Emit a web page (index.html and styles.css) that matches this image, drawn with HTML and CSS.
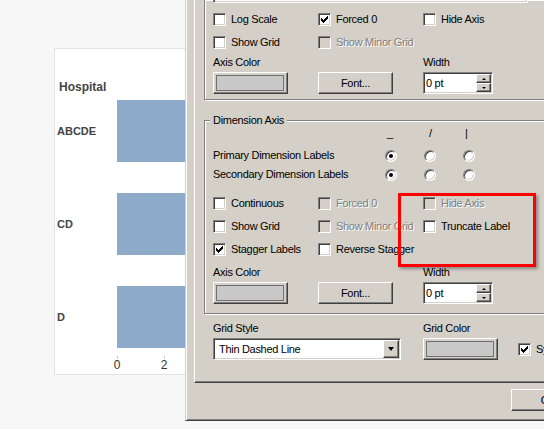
FILE: index.html
```html
<!DOCTYPE html>
<html>
<head>
<meta charset="utf-8">
<link rel="stylesheet" href="styles.css">
</head>
<body>
<div class="chart">
  <div class="dim-title">Hospital</div>
  <div class="rows">
    <div class="row"><span class="lbl">ABCDE</span><div class="bar"></div></div>
    <div class="row"><span class="lbl">CD</span><div class="bar"></div></div>
    <div class="row"><span class="lbl">D</span><div class="bar"></div></div>
  </div>
  <div class="axis"><span class="tick">0</span><span class="tick t2">2</span></div>
</div>

<div class="dialog">
  <div class="page">
    <div class="group g1">
      <div class="edit-top"></div>
      <div class="cgrid">
        <label class="cb"><span class="box"></span>Log Scale</label>
        <label class="cb"><span class="box"><svg width="7" height="7" viewBox="0 0 7 7" shape-rendering="crispEdges"><path d="M6 0h1v1h-1z M5 1h2v1h-2z M0 2h1v1h-1z M4 2h3v1h-3z M0 3h2v1h-2z M3 3h3v1h-3z M0 4h5v1h-5z M1 5h3v1h-3z M2 6h1v1h-1z"/></svg></span>Forced 0</label>
        <label class="cb"><span class="box"></span>Hide Axis</label>
        <label class="cb"><span class="box"></span>Show Grid</label>
        <label class="cb dis"><span class="box"></span>Show Minor Grid</label>
      </div>
      <div class="fgrid">
        <span class="flabel">Axis Color</span>
        <span></span>
        <span class="flabel">Width</span>
        <button class="btn colorbtn"><span class="swatch"></span></button>
        <button class="btn fontbtn">Font...</button>
        <div class="spin"><span class="spin-val">0 pt</span><span class="spin-btns"><span class="btn sb"><i class="up"></i></span><span class="btn sb"><i class="down"></i></span></span></div>
      </div>
    </div>

    <div class="group g2">
      <div class="gtitle"><span>Dimension Axis</span></div>
      <div class="rgrid rhead"><span></span><span class="h1">_</span><span class="h2">/</span><span class="h1">|</span></div>
      <div class="rgrid"><span class="rlabel">Primary Dimension Labels</span><span class="radio on"></span><span class="radio"></span><span class="radio"></span></div>
      <div class="rgrid r2"><span class="rlabel">Secondary Dimension Labels</span><span class="radio on"></span><span class="radio"></span><span class="radio"></span></div>
      <div class="cgrid c2">
        <label class="cb"><span class="box"></span>Continuous</label>
        <label class="cb dis"><span class="box"></span>Forced 0</label>
        <label class="cb dis"><span class="box"></span>Hide Axis</label>
        <label class="cb"><span class="box"></span>Show Grid</label>
        <label class="cb dis"><span class="box"></span>Show Minor Grid</label>
        <label class="cb"><span class="box"></span>Truncate Label</label>
        <label class="cb"><span class="box"><svg width="7" height="7" viewBox="0 0 7 7" shape-rendering="crispEdges"><path d="M6 0h1v1h-1z M5 1h2v1h-2z M0 2h1v1h-1z M4 2h3v1h-3z M0 3h2v1h-2z M3 3h3v1h-3z M0 4h5v1h-5z M1 5h3v1h-3z M2 6h1v1h-1z"/></svg></span>Stagger Labels</label>
        <label class="cb"><span class="box"></span>Reverse Stagger</label>
      </div>
      <div class="fgrid f2">
        <span class="flabel">Axis Color</span>
        <span></span>
        <span class="flabel">Width</span>
        <button class="btn colorbtn"><span class="swatch"></span></button>
        <button class="btn fontbtn">Font...</button>
        <div class="spin"><span class="spin-val">0 pt</span><span class="spin-btns"><span class="btn sb"><i class="up"></i></span><span class="btn sb"><i class="down"></i></span></span></div>
      </div>
    </div>

    <div class="gsgrid">
      <span class="flabel">Grid Style</span>
      <span class="flabel">Grid Color</span>
      <span></span>
      <div class="select"><span class="sel-val">Thin Dashed Line</span><span class="btn dd"><i class="down big"></i></span></div>
      <button class="btn colorbtn"><span class="swatch"></span></button>
      <label class="cb"><span class="box"><svg width="7" height="7" viewBox="0 0 7 7" shape-rendering="crispEdges"><path d="M6 0h1v1h-1z M5 1h2v1h-2z M0 2h1v1h-1z M4 2h3v1h-3z M0 3h2v1h-2z M3 3h3v1h-3z M0 4h5v1h-5z M1 5h3v1h-3z M2 6h1v1h-1z"/></svg></span>Synchronize</label>
    </div>
  </div>
  <div class="buttons"><button class="btn okbtn">OK</button></div>
</div>

<div class="highlight"></div>
</body>
</html>
```
FILE: styles.css
```css
html, body {
  margin: 0;
  padding: 0;
}
body {
  width: 544px;
  height: 429px;
  overflow: hidden;
  position: relative;
  background: #f7f7f7;
  font-family: "Liberation Sans", Arial, sans-serif;
}

/* ---------- chart ---------- */
.chart {
  position: absolute;
  left: 54px;
  top: 48px;
  width: 220px;
  height: 327px;
  box-sizing: border-box;
  border: 1px solid #e3e3e3;
  background: #fff;
  padding-left: 2px;
  color: #444;
}
.dim-title {
  margin-top: 31px;
  padding-left: 2px;
  font-weight: bold;
  font-size: 12px;
  line-height: 14px;
}
.rows {
  margin-top: 6px;
  display: flex;
  flex-direction: column;
  gap: 31px;
}
.row {
  display: grid;
  grid-template-columns: 60px 120px;
  align-items: center;
  height: 62px;
}
.lbl {
  font-weight: bold;
  font-size: 11px;
  line-height: 13px;
}
.bar {
  height: 62px;
  background: #8eaacb;
}
.axis {
  margin-top: 8px;
  margin-left: 53px;
  display: flex;
}
.tick {
  width: 14px;
  text-align: center;
  font-size: 12px;
  line-height: 12px;
  color: #333;
}
.tick::before {
  content: "";
  display: block;
  width: 1px;
  height: 3px;
  margin: 0 auto 0 auto;
  background: #c8c8c8;
}
.tick.t2 {
  margin-left: 33px;
}

/* ---------- dialog ---------- */
.dialog {
  position: absolute;
  left: 185px;
  top: 0;
  width: 420px;
  height: 421px;
  box-sizing: border-box;
  background: #d4d0c8;
  border-left: 1px solid #d4d0c8;
  border-bottom: 1px solid #404040;
  box-shadow: inset 1px 0 #fff, inset 0 -1px #808080;
  padding-left: 8px;
  font-size: 11px;
  letter-spacing: -0.3px;
  color: #000;
}
.page {
  height: 383px;
  box-sizing: border-box;
  border-left: 1px solid #fff;
  border-bottom: 1px solid #404040;
  box-shadow: inset 0 -1px #808080;
  padding-left: 9px;
}
.group {
  border: 1px solid #808080;
  box-shadow: inset 1px 1px #fff, 1px 1px #fff;
  padding-left: 8px;
}
.g1 {
  border-top: none;
  height: 100px;
  box-sizing: border-box;
}
.edit-top {
  width: 315px;
  height: 3px;
  box-sizing: border-box;
  background: #fff;
  border-left: 1px solid #808080;
  border-right: 1px solid #fff;
  border-bottom: 1px solid #fff;
  box-shadow: inset 1px 0 #404040, inset -1px -1px #d4d0c8;
}
.cgrid {
  margin-top: 10px;
  display: grid;
  grid-template-columns: 105px 105px 105px;
  row-gap: 10px;
}
.cb {
  display: flex;
  align-items: flex-start;
  gap: 5px;
  height: 13px;
  line-height: 13px;
  white-space: nowrap;
}
.box {
  flex: none;
  width: 13px;
  height: 13px;
  box-sizing: border-box;
  background: #fff;
  border: 1px solid;
  border-color: #808080 #fff #fff #808080;
  box-shadow: inset 1px 1px #404040, inset -1px -1px #d4d0c8;
  display: flex;
  align-items: center;
  justify-content: center;
}
.box svg {
  display: block;
  fill: #000;
}
.cb.dis {
  color: #808080;
  text-shadow: 1px 1px 0 #fff;
}
.cb.dis .box {
  background: #d4d0c8;
}
.fgrid {
  margin-top: 7px;
  display: grid;
  grid-template-columns: 105px 105px 105px;
  row-gap: 3px;
}
.flabel {
  line-height: 13px;
  height: 13px;
  white-space: nowrap;
}
.btn {
  box-sizing: border-box;
  border: 1px solid;
  border-color: #fff #404040 #404040 #fff;
  box-shadow: inset -1px -1px #808080;
  background: #d4d0c8;
  font-family: "Liberation Sans", Arial, sans-serif;
  font-size: 11px;
  letter-spacing: -0.3px;
  color: #000;
  padding: 0;
  margin: 0;
}
.colorbtn {
  width: 75px;
  height: 22px;
  display: flex;
  padding: 2px 3px 2px 2px;
}
.swatch {
  flex: 1;
  background: #c8c8c8;
  border: 1px solid #707070;
}
.fontbtn {
  width: 75px;
  height: 22px;
}
.spin {
  width: 70px;
  height: 22px;
  box-sizing: border-box;
  background: #fff;
  border: 1px solid;
  border-color: #808080 #fff #fff #808080;
  box-shadow: inset 1px 1px #404040, inset -1px -1px #d4d0c8;
  padding: 1px 1px 1px 1px;
  display: flex;
}
.spin-val {
  flex: 1;
  line-height: 18px;
  padding-left: 1px;
}
.spin-btns {
  width: 15px;
  display: flex;
  flex-direction: column;
}
.sb {
  height: 9px;
  display: flex;
  align-items: center;
  justify-content: center;
}
.up {
  width: 0;
  height: 0;
  border-left: 2px solid transparent;
  border-right: 2px solid transparent;
  border-bottom: 2px solid #000;
}
.down {
  width: 0;
  height: 0;
  border-left: 2px solid transparent;
  border-right: 2px solid transparent;
  border-top: 2px solid #000;
}
.down.big {
  border-left-width: 3.5px;
  border-right-width: 3.5px;
  border-top-width: 4px;
}

/* group 2 */
.g2 {
  margin-top: 20px;
  height: 194px;
  box-sizing: border-box;
}
.gtitle {
  margin-top: -7px;
  height: 13px;
  line-height: 13px;
}
.gtitle span {
  display: inline-block;
  background: #d4d0c8;
  margin-left: -3px;
  padding: 0 3px 0 3px;
}
.rgrid {
  display: grid;
  grid-template-columns: 172px 39px 39px 39px;
  height: 13px;
  line-height: 13px;
  align-items: center;
}
.rhead {
  margin-bottom: 9px;
}
.rhead .h1 { padding-left: 2px; }
.rhead .h2 { padding-left: 5px; }
.rgrid.r2 {
  margin-top: 6px;
}
.rlabel {
  white-space: nowrap;
}
.radio {
  width: 12px;
  height: 12px;
  box-sizing: border-box;
  border-radius: 50%;
  background: #fff;
  border: 1px solid;
  border-color: #808080 #fff #fff #808080;
  box-shadow: inset 1px 1px #404040, inset -1px -1px #d4d0c8;
  display: flex;
  align-items: center;
  justify-content: center;
}
.radio.on::after {
  content: "";
  width: 4px;
  height: 4px;
  border-radius: 50%;
  background: #000;
}
.cgrid.c2 {
  margin-top: 16px;
}
.fgrid.f2 {
  margin-top: 10px;
}

/* grid style row */
.gsgrid {
  margin-top: 8px;
  margin-left: 9px;
  display: grid;
  grid-template-columns: 210px 95px 100px;
  row-gap: 3px;
}
.gsgrid .cb {
  align-self: center;
}
.select {
  width: 188px;
  height: 22px;
  box-sizing: border-box;
  background: #fff;
  border: 1px solid;
  border-color: #808080 #fff #fff #808080;
  box-shadow: inset 1px 1px #404040, inset -1px -1px #d4d0c8;
  padding: 1px;
  display: flex;
}
.sel-val {
  flex: 1;
  line-height: 18px;
  padding-left: 4px;
}
.dd {
  width: 16px;
  height: 18px;
  display: flex;
  align-items: center;
  justify-content: center;
}

.buttons {
  margin-top: 6px;
  padding-left: 317px;
  display: flex;
}
.okbtn {
  width: 75px;
  height: 22px;
  flex: none;
}

/* annotation */
.highlight {
  position: absolute;
  left: 398px;
  top: 193px;
  width: 138px;
  height: 74px;
  box-sizing: border-box;
  border: 3px solid #f00;
  box-shadow: 2px 2px 3px rgba(0, 0, 0, 0.35);
}
```
